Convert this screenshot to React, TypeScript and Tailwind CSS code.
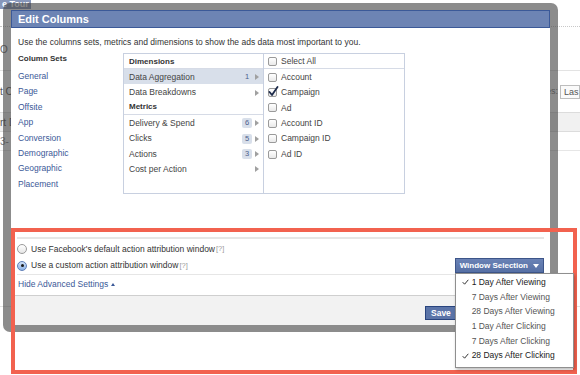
import React from 'react';

// ---- data ----
const COLUMN_SETS = ['General', 'Page', 'Offsite', 'App', 'Conversion', 'Demographic', 'Geographic', 'Placement'];

const DIMENSIONS = [
  { label: 'Data Aggregation', count: 1, active: true },
  { label: 'Data Breakdowns' },
];

const METRICS = [
  { label: 'Delivery & Spend', count: 6 },
  { label: 'Clicks', count: 5 },
  { label: 'Actions', count: 3 },
  { label: 'Cost per Action' },
];

const FIELDS = [
  { label: 'Account', checked: false },
  { label: 'Campaign', checked: true },
  { label: 'Ad', checked: false },
  { label: 'Account ID', checked: false },
  { label: 'Campaign ID', checked: false },
  { label: 'Ad ID', checked: false },
];

const WINDOWS = [
  { label: '1 Day After Viewing', checked: true },
  { label: '7 Days After Viewing', checked: false },
  { label: '28 Days After Viewing', checked: false },
  { label: '1 Day After Clicking', checked: false },
  { label: '7 Days After Clicking', checked: false },
  { label: '28 Days After Clicking', checked: true },
];

type Row = { label: string; count?: number; active?: boolean };

function Arrow() {
  return (
    <svg width="4" height="6" viewBox="0 0 4 6" className="shrink-0">
      <path d="M0 0 L4 3 L0 6 Z" fill="#a0a0a0" />
    </svg>
  );
}

function Checkbox({ checked }: { checked: boolean }) {
  return (
    <span className="relative w-[9px] h-[9px] shrink-0 rounded-[2px] border border-[#9a9a9a] bg-gradient-to-b from-white to-[#e9e9e9]">
      {checked && (
        <svg width="11" height="11" viewBox="0 0 11 11" className="absolute -left-[1px] -top-[3px]">
          <path d="M1.5 6 L4 9 L9.5 1" stroke="#1c2a4a" strokeWidth="1.8" fill="none" strokeLinecap="round" strokeLinejoin="round" />
        </svg>
      )}
    </span>
  );
}

function Radio({ checked }: { checked: boolean }) {
  return (
    <span
      className={`w-[10px] h-[10px] shrink-0 rounded-full border flex items-center justify-center ${
        checked ? 'border-[#5f7fb8] bg-gradient-to-b from-[#cfe1f7] to-[#8fb4e6]' : 'border-[#9a9a9a] bg-gradient-to-b from-white to-[#e6e6e6]'
      }`}
    >
      {checked && <span className="w-[3px] h-[3px] rounded-full bg-[#1a1a1a]" />}
    </span>
  );
}

function MenuRow({ row }: { row: Row }) {
  return (
    <div className={`h-[15.4px] flex items-center pl-[5px] pr-[4px] pt-[1px] ${row.active ? 'bg-[#d8dfea]' : ''}`}>
      <span className="flex-1 text-[#444]">{row.label}</span>
      {row.count !== undefined && (
        <span className="w-[10px] h-[10px] mr-[3px] rounded-[2px] bg-[#d8dfea] text-[#4c5e8a] text-[7.5px] leading-[10px] text-center">
          {row.count}
        </span>
      )}
      <Arrow />
    </div>
  );
}

function BackgroundPage() {
  return (
    <div className="flex flex-col text-[9px] text-[#777]">
      <div className="h-[9px] flex">
        <span className="px-[2px] bg-[#8797ba] text-white font-bold leading-[9px]">e Tour</span>
      </div>
      <div className="h-[18px] border-b border-dotted border-[#c8c8c8]" />
      <div className="h-[43px] flex items-center pt-[2px]">
        <span className="text-[10px] text-[#666]">O</span>
      </div>
      <div className="h-[42px] border-t border-[#e3e3e3] flex items-center justify-between">
        <span className="text-[10px] text-[#555]">t C</span>
        <div className="flex items-center gap-[2px]">
          <span>es:</span>
          <span className="h-[14px] w-[20px] border border-[#bdbdbd] bg-[#fafafa] text-[#555] pl-[3px] leading-[12px]">Las</span>
        </div>
      </div>
      <div className="h-[20px] bg-[#f1f1f1] border-y border-[#dcdcdc] flex items-center">
        <span className="text-[10px] text-[#555]">rt D</span>
      </div>
      <div className="h-[19px] border-b border-[#e6e6e6] flex items-center">
        <span className="text-[10px] text-[#888]">3-</span>
      </div>
      <div className="h-[156px] border-b border-[#e3e3e3]" />
    </div>
  );
}

export default function App() {
  return (
    <div className="relative w-[580px] h-[375px] overflow-hidden bg-white font-['Liberation_Sans',Arial,sans-serif]">
      <BackgroundPage />

      {/* dialog */}
      <div className="absolute left-[3px] top-[3px] w-[555px] h-[329px] rounded-[7px] bg-[rgba(64,64,64,0.6)] pt-[7px] pb-[7px] px-[8px]">
        <div className="h-full flex flex-col">
          <div className="h-[18px] bg-[#6d84b4] border border-[#3b5998] flex items-center pl-[6px] text-white font-bold text-[11px]">
            Edit Columns
          </div>

          <div className="flex-1 bg-white flex flex-col">
            <p className="pt-[9px] px-[7px] text-[8.5px] leading-[11px] text-[#333]">
              Use the columns sets, metrics and dimensions to show the ads data most important to you.
            </p>

            <div className="flex mt-[5px] pl-[7px]">
              {/* column sets */}
              <div className="w-[105px] flex flex-col pt-[1px]">
                <span className="leading-[10px] text-[8px] font-bold text-[#333]">Column Sets</span>
                <div className="mt-[5px] flex flex-col">
                  {COLUMN_SETS.map(name => (
                    <span key={name} className="leading-[15.4px] text-[8.5px] text-[#3b5998]">{name}</span>
                  ))}
                </div>
              </div>

              {/* dimensions / metrics + fields */}
              <div className="w-[282px] h-[141px] border border-[#c8d0e0] flex text-[8.5px]">
                <div className="w-[140px] border-r border-[#c8d0e0] flex flex-col">
                  <div className="h-[15px] border-b border-[#d6dbe6] flex items-center pl-[5px] pt-[1px] font-bold text-[8px] text-[#333]">Dimensions</div>
                  {DIMENSIONS.map(row => <MenuRow key={row.label} row={row} />)}
                  <div className="h-[15.2px] border-b border-[#d6dbe6] flex items-center pl-[5px] pt-[1px] font-bold text-[8px] text-[#333]">Metrics</div>
                  {METRICS.map(row => <MenuRow key={row.label} row={row} />)}
                </div>
                <div className="flex-1 flex flex-col">
                  <div className="h-[15px] border-b border-[#d6dbe6] flex items-center gap-[4px] pl-[4px] pt-[1px] text-[#444]">
                    <Checkbox checked={false} />
                    <span>Select All</span>
                  </div>
                  {FIELDS.map(f => (
                    <div key={f.label} className="h-[15.4px] flex items-center gap-[4px] pl-[4px] pt-[1px] text-[#444]">
                      <Checkbox checked={f.checked} />
                      <span>{f.label}</span>
                    </div>
                  ))}
                </div>
              </div>
            </div>

            {/* advanced settings */}
            <div className="mt-auto">
              <div className="mx-[6px] border-t-2 border-[#e6e6e6] pt-[3px] pb-[1px] text-[8.5px] text-[#333]">
                <div className="h-[14px] flex items-center gap-[4px]">
                  <Radio checked={false} />
                  <span>Use Facebook's default action attribution window</span>
                  <span className="-ml-[3px] text-[7.5px] text-[#999]">[?]</span>
                </div>
                <div className="mt-[2px] h-[15px] flex items-center gap-[4px]">
                  <Radio checked />
                  <span>Use a custom action attribution window</span>
                  <span className="-ml-[3px] text-[7.5px] text-[#999]">[?]</span>
                  <div className="relative ml-auto">
                    <button className="h-[15px] flex items-center gap-[5px] px-[4px] bg-gradient-to-b from-[#6a82b5] to-[#5670a5] border border-[#3d5589] text-white font-bold text-[8px]">
                      Window Selection
                      <svg width="6" height="4" viewBox="0 0 6 4">
                        <path d="M0 0 L6 0 L3 4 Z" fill="#fff" />
                      </svg>
                    </button>
                    <div className="absolute left-0 top-full w-[119px] bg-white border border-[#8f8f8f] shadow-[1px_2px_3px_rgba(0,0,0,0.25)] pt-[1px] pb-[4px] z-10">
                      {WINDOWS.map(w => (
                        <div key={w.label} className="h-[14.7px] flex items-center pl-[6px]">
                          <span className="w-[10px] shrink-0">
                            {w.checked && (
                              <svg width="7" height="6" viewBox="0 0 7 6">
                                <path d="M0.7 3.2 L2.6 5.2 L6.3 0.8" stroke="#333" strokeWidth="1" fill="none" />
                              </svg>
                            )}
                          </span>
                          <span className={w.checked ? 'text-[#222]' : 'text-[#555]'}>{w.label}</span>
                        </div>
                      ))}
                    </div>
                  </div>
                </div>
              </div>
              <div className="mx-[6px] border-t border-[#e6e6e6] h-[21px] flex items-center pl-[1px] pb-[2px] text-[8.5px] text-[#3b5998] gap-[3px]">
                Hide Advanced Settings
                <svg width="4" height="3" viewBox="0 0 4 3">
                  <path d="M0 3 L2 0 L4 3 Z" fill="#3b5998" />
                </svg>
              </div>
              <div className="h-[30px] bg-[#f2f2f2] border-t border-[#cfcfcf] flex items-start pt-[10px] pl-[414px]">
                <button className="h-[14px] px-[5px] bg-[#5b74a8] border border-[#29447e] text-white font-bold text-[8.5px] leading-[12px]">Save</button>
              </div>
            </div>
          </div>
        </div>
      </div>

      {/* annotation box */}
      <div className="absolute left-[11px] top-[228px] w-[566px] h-[146px] border-[4px] border-[#f2624f] pointer-events-none" />
    </div>
  );
}
